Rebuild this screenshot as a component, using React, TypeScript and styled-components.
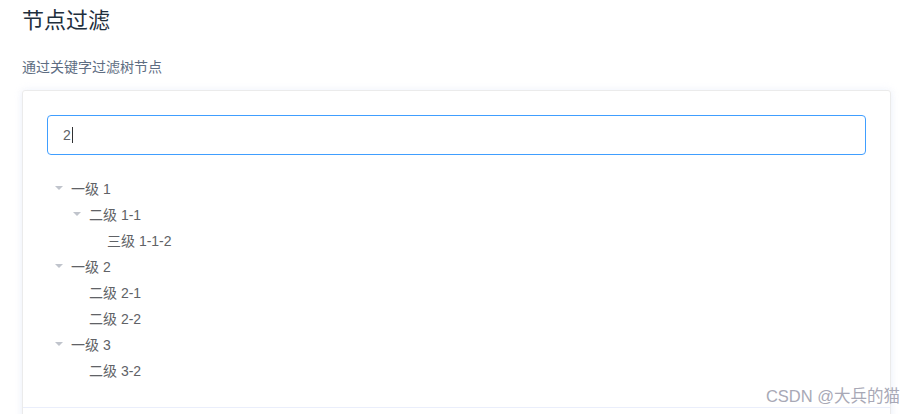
import React from "react";
import styled, { createGlobalStyle } from "styled-components";

const GlobalStyle = createGlobalStyle`
  html, body {
    margin: 0;
    padding: 0;
    background: #fff;
    overflow: hidden;
  }
  body {
    font-family: "Helvetica Neue", Helvetica, "Liberation Sans", Arial, "Noto Sans CJK SC", sans-serif;
  }
`;

interface TreeNode {
  label: string;
  children?: TreeNode[];
}

const data: TreeNode[] = [
  { label: "一级 1", children: [{ label: "二级 1-1", children: [{ label: "三级 1-1-2" }] }] },
  { label: "一级 2", children: [{ label: "二级 2-1" }, { label: "二级 2-2" }] },
  { label: "一级 3", children: [{ label: "二级 3-2" }] },
];

const Page = styled.div`
  position: relative;
  width: 916px;
  height: 414px;
  padding: 0 25px 0 22px;
  box-sizing: border-box;
  overflow: hidden;
`;

const Title = styled.h3`
  margin: 0;
  padding-top: 7px;
  font-size: 22px;
  font-weight: 400;
  line-height: 28px;
  color: #1f2f3d;
`;

const Desc = styled.p`
  margin: 21px 0 0;
  font-size: 14px;
  line-height: 22px;
  color: #5e6d82;
`;

const Card = styled.div`
  margin-top: 12px;
  border: 1px solid #ebebeb;
  border-radius: 3px;
  box-shadow: 0 0 8px 0 rgba(232, 237, 250, 0.6), 0 2px 4px 0 rgba(232, 237, 250, 0.5);
`;

const Source = styled.div`
  padding: 24px;
`;

const Input = styled.div`
  height: 40px;
  box-sizing: border-box;
  border: 1px solid #409eff;
  border-radius: 4px;
  padding: 0 15px;
  display: flex;
  align-items: center;
  font-size: 14px;
  color: #606266;
`;

const Caret = styled.span`
  display: inline-block;
  width: 1px;
  height: 16px;
  background: #303133;
  margin-left: 1px;
`;

const Tree = styled.div`
  margin-top: 20px;
`;

const Row = styled.div<{ $level: number }>`
  height: 26px;
  display: flex;
  align-items: center;
  padding-left: ${(p) => p.$level * 18}px;
  font-size: 14px;
  color: #606266;
`;

const Expand = styled.span<{ $leaf: boolean }>`
  width: 12px;
  height: 12px;
  padding: 6px;
  display: flex;
  align-items: center;
  justify-content: center;
  &::before {
    content: "";
    display: ${(p) => (p.$leaf ? "none" : "block")};
    width: 0;
    height: 0;
    border-left: 4px solid transparent;
    border-right: 4px solid transparent;
    border-top: 4px solid #c0c4cc;
  }
`;

const Meta = styled.div`
  height: 40px;
  border-top: 1px solid #eaeefb;
  background: #fff;
`;

const Watermark = styled.div`
  position: absolute;
  right: 16px;
  bottom: 7px;
  font-size: 16.5px;
  color: #999aaa;
  font-family: "Microsoft YaHei", "Liberation Sans", "Noto Sans CJK SC", sans-serif;
  opacity: 0.85;
`;

const renderNodes = (nodes: TreeNode[], level: number): React.ReactNode[] =>
  nodes.flatMap((n) => [
    <Row key={n.label} $level={level}>
      <Expand $leaf={!n.children} />
      <span>{n.label}</span>
    </Row>,
    ...(n.children ? renderNodes(n.children, level + 1) : []),
  ]);

export default function App() {
  return (
    <>
      <GlobalStyle />
      <Page>
        <Title>节点过滤</Title>
        <Desc>通过关键字过滤树节点</Desc>
        <Card>
          <Source>
            <Input>
              2<Caret />
            </Input>
            <Tree>{renderNodes(data, 0)}</Tree>
          </Source>
          <Meta />
        </Card>
        <Watermark>CSDN @大兵的猫</Watermark>
      </Page>
    </>
  );
}
